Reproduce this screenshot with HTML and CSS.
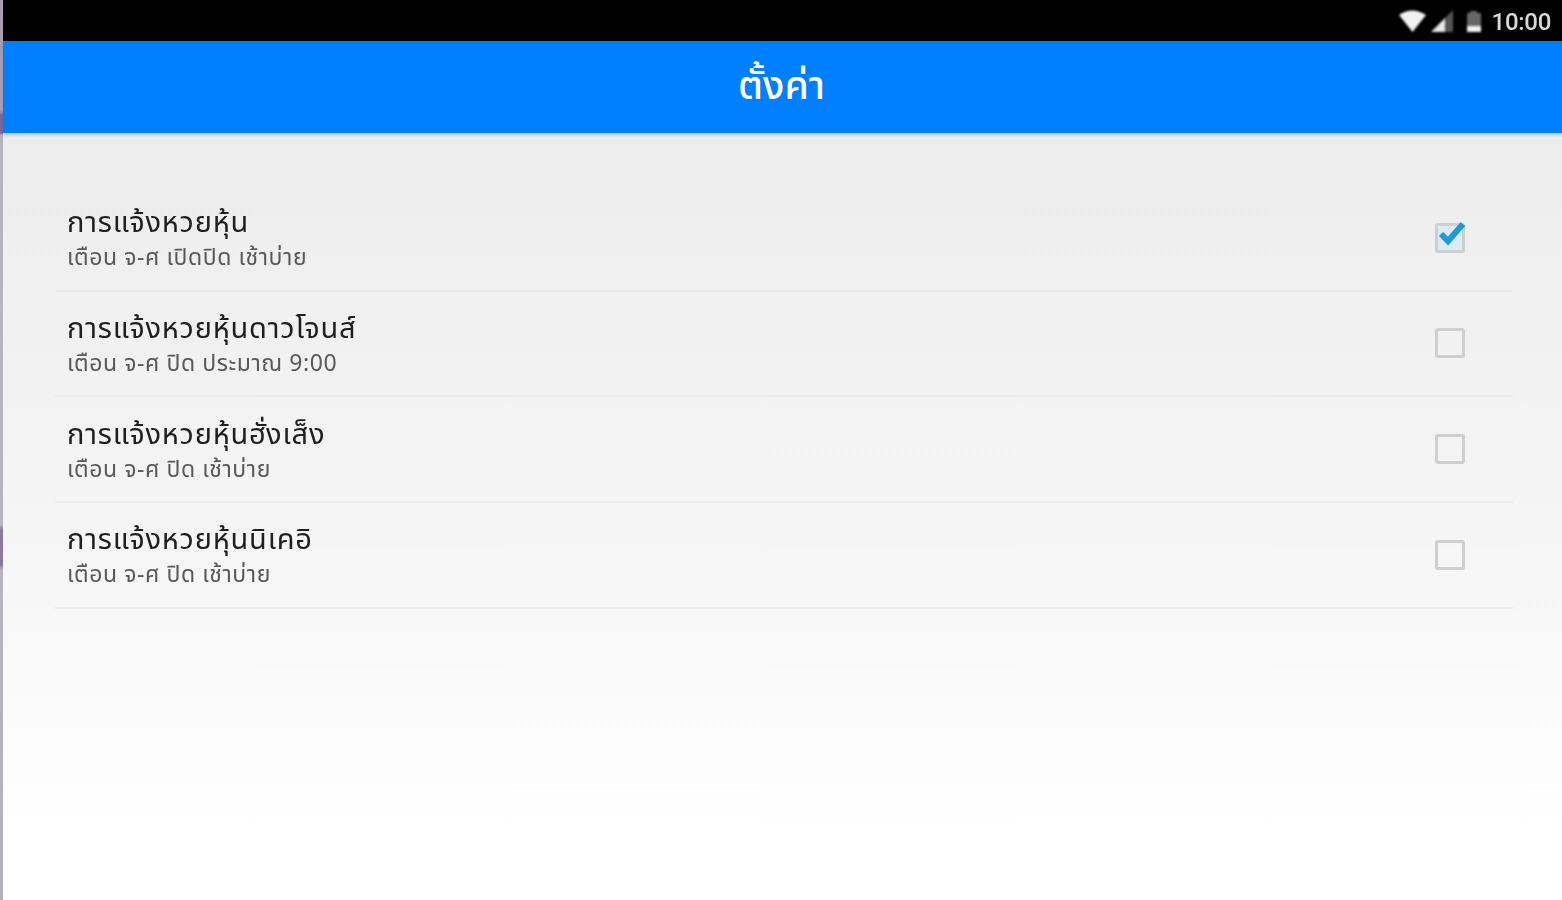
FILE: index.html
```html
<!DOCTYPE html>
<html lang="th">
<head>
    <meta charset="UTF-8">
    <meta name="viewport" content="width=device-width, initial-scale=1.0">
    <title>ตั้งค่า</title>
    <link rel="stylesheet" href="styles.css">
</head>
<body>
    <div class="edge"></div>
    <div class="screen">
        <!-- status bar -->
        <div class="status-bar">
            <svg class="icon-wifi" width="30" height="24" viewBox="0 0 30 24">
                <path d="M1 6 Q14 -3 28 6 L14.500 23 Z" fill="#f2f2f2"/>
            </svg>
            <svg class="icon-signal" width="24" height="24" viewBox="0 0 24 24">
                <path d="M1 23 L15 9 V23 Z" fill="#e8e8e8"/>
                <path d="M15 9 L23 1 V23 H15 Z" fill="#555555"/>
            </svg>
            <svg class="icon-battery" width="18" height="24" viewBox="0 0 18 24">
                <path d="M5 2 H12 V4 H16 V23 H2 V4 H5 Z" fill="#666666"/>
                <rect x="2" y="17" width="14" height="6" fill="#f2f2f2"/>
            </svg>
            <span class="clock">10:00</span>
        </div>

        <!-- header -->
        <div class="app-bar">ตั้งค่า</div>

        <!-- settings -->
        <div class="content">
            <div class="row">
                <div class="row-text">
                    <div class="row-title">การแจ้งหวยหุ้น</div>
                    <div class="row-sub">เตือน จ-ศ เปิดปิด เช้าบ่าย</div>
                </div>
                <div class="check checked">
                    <svg class="tick" width="30" height="28" viewBox="0 0 30 28">
                        <path d="M4 14 L11 21 L26 4" fill="none" stroke="#1e9bd2" stroke-width="6"/>
                    </svg>
                </div>
            </div>
            <div class="row">
                <div class="row-text">
                    <div class="row-title">การแจ้งหวยหุ้นดาวโจนส์</div>
                    <div class="row-sub">เตือน จ-ศ ปิด ประมาณ 9:00</div>
                </div>
                <div class="check"></div>
            </div>
            <div class="row">
                <div class="row-text">
                    <div class="row-title">การแจ้งหวยหุ้นฮั่งเส็ง</div>
                    <div class="row-sub">เตือน จ-ศ ปิด เช้าบ่าย</div>
                </div>
                <div class="check"></div>
            </div>
            <div class="row">
                <div class="row-text">
                    <div class="row-title">การแจ้งหวยหุ้นนิเคอิ</div>
                    <div class="row-sub">เตือน จ-ศ ปิด เช้าบ่าย</div>
                </div>
                <div class="check"></div>
            </div>
        </div>
    </div>
</body>
</html>
```

FILE: styles.css
```css
html, body {
    height: 100%;
}

body {
    font-family: "Noto Sans", "Noto Sans Thai", "DejaVu Sans", sans-serif;
    margin: 0;
    padding: 0;
    display: flex;
    overflow: hidden;
    background-color: #ffffff;
}

.edge {
    width: 3px;
    flex-shrink: 0;
    background: linear-gradient(#a79cb0 0, #a9a4b0 110px, #7a6a9a 115px, #7a6a9a 133px, #b8b4bc 135px, #b8b4bc 525px, #8a7aa0 530px, #8a7aa0 565px, #b8b4bc 570px, #b4b0b8 100%);
}

.screen {
    flex: 1;
    display: flex;
    flex-direction: column;
    min-width: 0;
}

.status-bar {
    height: 41px;
    background-color: #000000;
    display: flex;
    align-items: center;
    justify-content: flex-end;
    padding-right: 11px;
    box-sizing: border-box;
}

.status-bar svg {
    filter: blur(0.8px);
}

.icon-wifi {
    margin-right: 2px;
}

.icon-signal {
    margin-right: 11px;
}

.icon-battery {
    margin-right: 9px;
}

.clock {
    font-family: Roboto, sans-serif;
    font-size: 24px;
    font-weight: 500;
    letter-spacing: -0.3px;
    color: #d8d8d8;
    padding-top: 3px;
    filter: blur(0.7px);
}

.app-bar {
    position: relative;
    height: 92px;
    background-color: #007fff;
    color: #ffffff;
    font-size: 39px;
    font-weight: 500;
    display: flex;
    align-items: center;
    justify-content: center;
    padding-right: 2px;
    box-shadow: 0 2px 3px rgba(0, 80, 200, 0.25);
}

.content {
    flex: 1;
    padding: 53px 49px 0 52px;
    background: linear-gradient(#ececec 0, #efefef 100px, #f5f5f5 400px, #ffffff 700px);
}

.row {
    height: 105.67px;
    box-sizing: border-box;
    border-bottom: 2px solid #ebebeb;
    display: flex;
    align-items: center;
    justify-content: space-between;
    padding: 0 48px 0 12px;
}

.row-title {
    font-size: 29px;
    letter-spacing: 0.8px;
    line-height: 36px;
    color: #1f1f1f;
    padding-top: 1px;
    filter: blur(0.65px);
}

.row-sub {
    font-size: 23px;
    letter-spacing: 0.55px;
    line-height: 34px;
    color: #595959;
    filter: blur(0.65px);
}

.check {
    position: relative;
    width: 30px;
    height: 30px;
    box-sizing: border-box;
    border: 3px solid #cfcfcf;
    border-radius: 3px;
    filter: blur(0.7px);
}

.check.checked {
    background-color: #dcebf5;
}

.tick {
    position: absolute;
    left: -1px;
    top: -6px;
}
```
